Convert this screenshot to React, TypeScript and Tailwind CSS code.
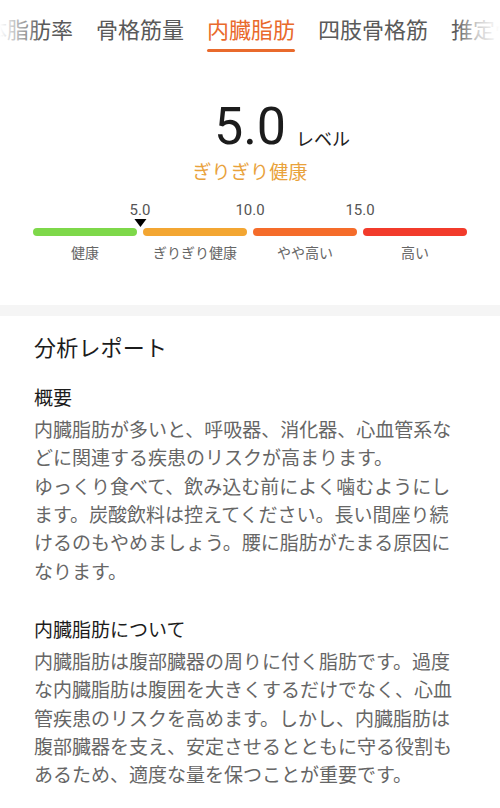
import { Fragment } from 'react'

const JP = { fontFamily: '"Noto Sans CJK JP", "Noto Sans", sans-serif' }
const NUM = { fontFamily: 'Roboto, "Noto Sans", sans-serif' }

const TABS = ['体脂肪率', '骨格筋量', '内臓脂肪', '四肢骨格筋', '推定骨量']
const ACTIVE = '内臓脂肪'

const SEGMENTS = [
  { label: '健康', color: 'bg-[#7ed84a]', mark: '5.0', pointer: true },
  { label: 'ぎりぎり健康', color: 'bg-[#f3a632]', mark: '10.0', pointer: false },
  { label: 'やや高い', color: 'bg-[#f56c2a]', mark: '15.0', pointer: false },
  { label: '高い', color: 'bg-[#f23b2b]', mark: null, pointer: false },
]

const SUMMARY = [
  '内臓脂肪が多いと、呼吸器、消化器、心血管系な',
  'どに関連する疾患のリスクが高まります。',
  'ゆっくり食べて、飲み込む前によく噛むようにし',
  'ます。炭酸飲料は控えてください。長い間座り続',
  'けるのもやめましょう。腰に脂肪がたまる原因に',
  'なります。',
]

const ABOUT = [
  '内臓脂肪は腹部臓器の周りに付く脂肪です。過度',
  'な内臓脂肪は腹囲を大きくするだけでなく、心血',
  '管疾患のリスクを高めます。しかし、内臓脂肪は',
  '腹部臓器を支え、安定させるとともに守る役割も',
  'あるため、適度な量を保つことが重要です。',
]

function Lines({ lines }: { lines: string[] }) {
  return (
    <div className="text-[19px] leading-[28.33px] text-[#666666]">
      {lines.map((l, i) => (
        <Fragment key={i}>
          <div className="whitespace-nowrap">{l}</div>
        </Fragment>
      ))}
    </div>
  )
}

export default function App() {
  return (
    <main className="w-[500px] h-[808px] overflow-hidden bg-white" style={JP}>
      {/* tabs */}
      <div className="relative h-[56px] overflow-hidden">
        <div className="flex gap-[23px] ml-[-15px] pt-[14px] whitespace-nowrap">
          {TABS.map((t) => (
            <div key={t} className="flex flex-col items-center shrink-0">
              <span
                className={`text-[22px] leading-[28px] ${
                  t === ACTIVE ? 'text-[#e96a2c]' : 'text-[#5a5a5a]'
                }`}
              >
                {t}
              </span>
              <span
                className={`mt-[7px] h-[3px] w-full rounded-full ${
                  t === ACTIVE ? 'bg-[#e96a2c]' : 'bg-transparent'
                }`}
              />
            </div>
          ))}
        </div>
        <div className="absolute left-0 top-0 h-full w-[42px] bg-gradient-to-r from-white to-transparent" />
        <div className="absolute right-0 top-0 h-full w-[45px] bg-gradient-to-l from-white via-white/70 to-transparent" />
      </div>

      {/* value */}
      <div className="flex justify-center pt-[45px]">
        <div className="relative">
          <span className="text-[52px] leading-[52px] text-[#1c1c1c]" style={NUM}>
            5.0
          </span>
          <span className="absolute left-full bottom-[4px] ml-[10px] whitespace-nowrap text-[18px] leading-[22px] text-[#222222]">
            レベル
          </span>
        </div>
      </div>
      <div className="mt-[5px] text-center text-[19px] leading-[26px] tracking-[0.2px] text-[#e9a23b]">
        ぎりぎり健康
      </div>

      {/* scale */}
      <div className="mx-[33px] mt-[17px] grid grid-cols-4 gap-x-[6px]">
        {SEGMENTS.map((s) => (
          <div key={s.label} className="relative h-[27px]">
            {s.mark && (
              <div className="absolute right-[-3px] top-0 flex translate-x-1/2 flex-col items-center">
                <span className="text-[15px] leading-[18px] text-[#555555]" style={NUM}>
                  {s.mark}
                </span>
                {s.pointer && (
                  <span className="mt-[0px] h-0 w-0 border-x-[6.5px] border-t-[8px] border-x-transparent border-t-black" />
                )}
              </div>
            )}
          </div>
        ))}
        {SEGMENTS.map((s) => (
          <div key={s.label + 'bar'} className={`h-[8px] rounded-full ${s.color}`} />
        ))}
        {SEGMENTS.map((s) => (
          <div
            key={s.label + 'lbl'}
            className="mt-[6px] text-center text-[14px] leading-[20px] text-[#666666]"
          >
            {s.label}
          </div>
        ))}
      </div>

      <div className="mt-[43px] h-[11px] bg-[#f5f5f5]" />

      {/* report */}
      <section className="px-[34px] pt-[15px]">
        <h2 className="text-[22px] leading-[30px] tracking-[0.2px] text-[#1c1c1c]">分析レポート</h2>
        <h3 className="mt-[22px] text-[19px] leading-[28px] text-[#1c1c1c]">概要</h3>
        <div className="mt-[4px]">
          <Lines lines={SUMMARY} />
        </div>
        <h3 className="mt-[30px] text-[19px] leading-[28px] text-[#1c1c1c]">内臓脂肪について</h3>
        <div className="mt-[4px]">
          <Lines lines={ABOUT} />
        </div>
      </section>
    </main>
  )
}
